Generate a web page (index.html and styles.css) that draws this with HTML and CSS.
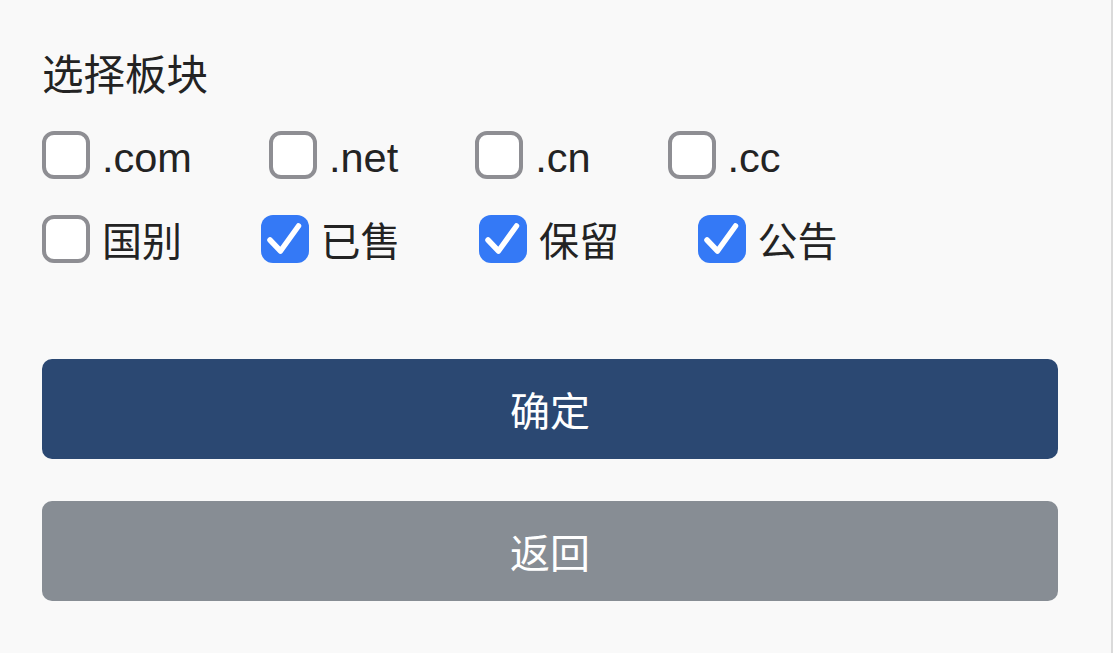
FILE: index.html
```html
<!DOCTYPE html>
<html lang="zh-CN">
<head>
    <meta charset="UTF-8">
    <meta name="viewport" content="width=device-width, initial-scale=1.0">
    <title>选择板块</title>
    <link rel="stylesheet" href="styles.css">
</head>
<body>

<div class="panel">
    <h2 class="title">选择板块</h2>

    <div class="option-row">
        <label class="option"><span class="box"></span><span class="label-text">.com</span></label>
        <label class="option"><span class="box"></span><span class="label-text">.net</span></label>
        <label class="option"><span class="box"></span><span class="label-text">.cn</span></label>
        <label class="option"><span class="box"></span><span class="label-text">.cc</span></label>
    </div>

    <div class="option-row wide">
        <label class="option"><span class="box"></span><span class="label-text cjk">国别</span></label>
        <label class="option"><span class="box checked"><svg viewBox="0 0 48 48"><path d="M9 25 L19.5 36 L37.5 11"/></svg></span><span class="label-text cjk">已售</span></label>
        <label class="option"><span class="box checked"><svg viewBox="0 0 48 48"><path d="M9 25 L19.5 36 L37.5 11"/></svg></span><span class="label-text cjk">保留</span></label>
        <label class="option"><span class="box checked"><svg viewBox="0 0 48 48"><path d="M9 25 L19.5 36 L37.5 11"/></svg></span><span class="label-text cjk">公告</span></label>
    </div>

    <div class="actions">
        <button type="button" class="btn btn-primary">确定</button>
        <button type="button" class="btn btn-back">返回</button>
    </div>
</div>

</body>
</html>
```

FILE: styles.css
```css
html, body {
    margin: 0;
    padding: 0;
    height: 100%;
}
body {
    font-family: "Liberation Sans", "Noto Sans CJK SC", sans-serif;
    background-color: #f9f9f9;
    color: #232323;
    overflow: hidden;
}
.panel {
    height: 100%;
    box-sizing: border-box;
    padding: 52px 53px 0 42px;
    border-right: 2px solid #dadada;
}
.title {
    margin: 0 0 31px;
    font-size: 41.5px;
    font-weight: normal;
    line-height: 48px;
}
.option-row {
    display: flex;
    align-items: center;
    height: 48px;
    margin-bottom: 36px;
}
.option {
    display: flex;
    align-items: center;
    margin-right: 77px;
}
.option-row.wide .option {
    margin-right: 78.5px;
}
.box {
    width: 48px;
    height: 48px;
    box-sizing: border-box;
    border: 4px solid #8e8e93;
    border-radius: 12px;
    background-color: #fff;
    flex-shrink: 0;
}
.box.checked {
    border: none;
    background-color: #3479f6;
}
.box svg {
    display: block;
    width: 48px;
    height: 48px;
}
.box svg path {
    fill: none;
    stroke: #fff;
    stroke-width: 5.5;
    stroke-linecap: round;
    stroke-linejoin: round;
}
.label-text {
    margin-left: 12px;
    font-size: 41.5px;
    line-height: 48px;
    position: relative;
    top: 3px;
}
.label-text.cjk {
    font-size: 40px;
}
.actions {
    margin-top: 96px;
}
.btn {
    display: block;
    width: 100%;
    height: 100px;
    border: none;
    border-radius: 10px;
    color: #fff;
    font-family: "Noto Sans CJK SC", sans-serif;
    font-size: 40px;
    cursor: pointer;
}
.btn-primary {
    background-color: #2b4872;
    margin-bottom: 42px;
}
.btn-back {
    background-color: #878d94;
}
```
